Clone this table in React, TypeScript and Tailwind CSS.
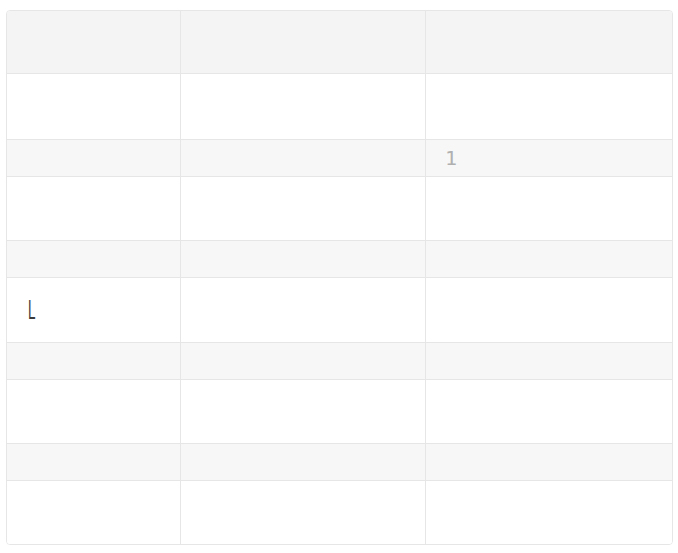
const rows = [
  { h: "h-[66px]", bg: "bg-white", cells: ["", "", ""] },
  { h: "h-[37px]", bg: "bg-[#f7f7f7]", cells: ["", "", "1"] },
  { h: "h-[64px]", bg: "bg-white", cells: ["", "", ""] },
  { h: "h-[37px]", bg: "bg-[#f7f7f7]", cells: ["", "", ""] },
  { h: "h-[65px]", bg: "bg-white", cells: ["L", "", ""] },
  { h: "h-[37px]", bg: "bg-[#f7f7f7]", cells: ["", "", ""] },
  { h: "h-[64px]", bg: "bg-white", cells: ["", "", ""] },
  { h: "h-[37px]", bg: "bg-[#f7f7f7]", cells: ["", "", ""] },
  { h: "h-[63px]", bg: "bg-white", cells: ["", "", ""] },
];

export default function App() {
  return (
    <div className="w-[678px] h-[553px] bg-white pt-[10px] pl-[6px]">
      <div className="w-[667px] border border-[#e6e6e6] rounded-[4px] overflow-hidden font-['DejaVu_Sans_Mono',monospace]">
        {/* header */}
        <div className="grid grid-cols-[174px_245px_1fr] h-[63px] bg-[#f4f4f4] border-b border-[#e6e6e6]">
          <div className="border-r border-[#e6e6e6]" />
          <div className="border-r border-[#e6e6e6]" />
          <div />
        </div>
        {rows.map((r, i) => (
          <div
            key={i}
            className={`grid grid-cols-[174px_245px_1fr] ${r.h} ${r.bg} ${i < rows.length - 1 ? "border-b border-[#e6e6e6]" : ""}`}
          >
            {r.cells.map((c, j) => (
              <div
                key={j}
                className={`flex items-center ${j < 2 ? "border-r border-[#e6e6e6]" : ""} ${j === 0 ? "pl-[21px]" : "pl-[19px]"}`}
              >
                {c === "L" && (
                  <span className="inline-block origin-left scale-x-50 text-[27px] leading-none text-[#3a3a3a] font-['Liberation_Sans',sans-serif]">
                    L
                  </span>
                )}
                {c === "1" && <span className="text-[20px] leading-none text-[#b0b0b0]">1</span>}
              </div>
            ))}
          </div>
        ))}
      </div>
    </div>
  );
}
